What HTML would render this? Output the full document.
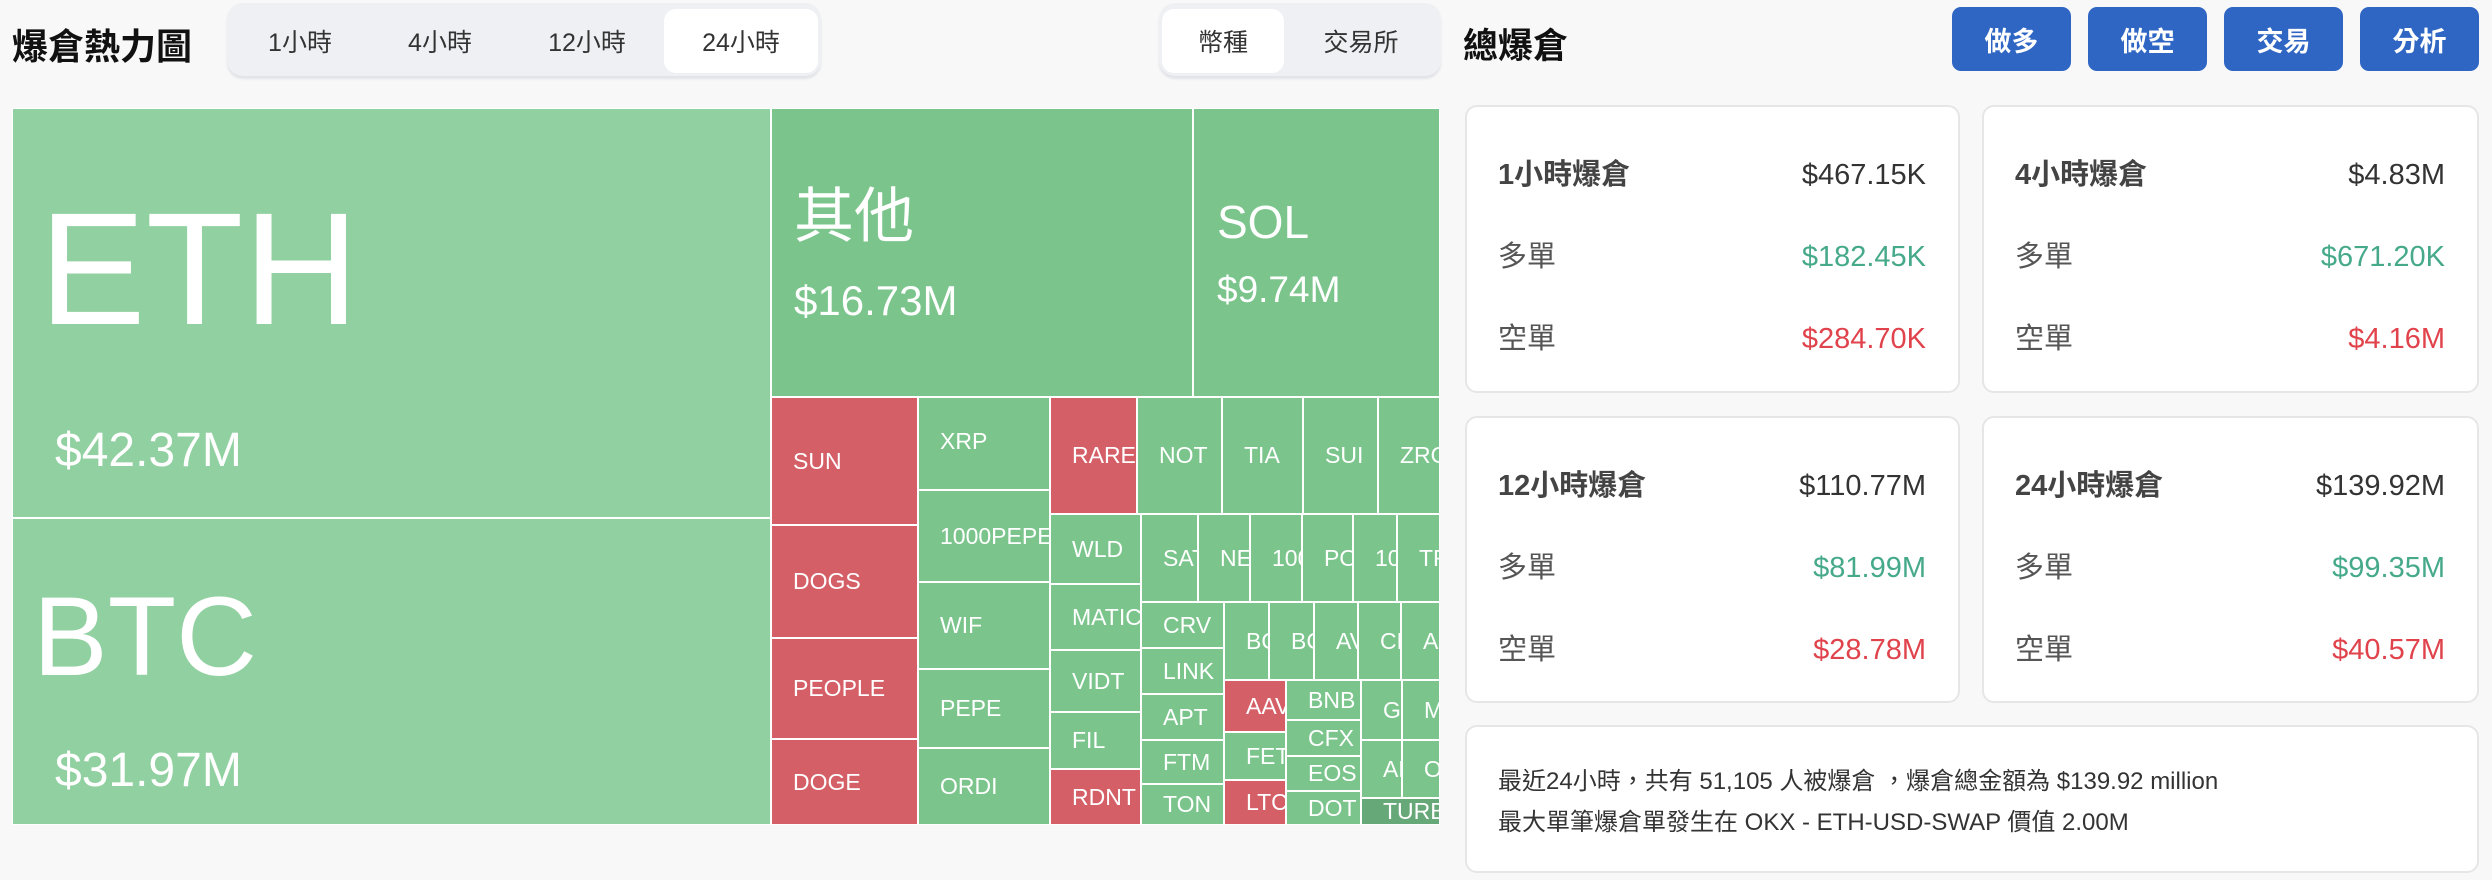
<!DOCTYPE html>
<html><head><meta charset="utf-8"><style>
*{margin:0;padding:0;box-sizing:border-box}
body{width:2492px;height:880px;background:#f8f8f8;font-family:"Liberation Sans","Noto Sans CJK TC",sans-serif;position:relative;overflow:hidden;color:#222}
.a{position:absolute}
.t{position:absolute;border:1.5px solid #fff;color:#fff;overflow:hidden;white-space:nowrap;display:flex;align-items:center;padding-left:21px;font-size:23px}
.g{background:#7bc58c}.r{background:#d55f66}.l{background:#91d0a1}.d{background:#66a877}
.grp{position:absolute;background:#eff0f4;border-radius:16px;box-shadow:0 3px 2px #e2e3e8}
.tab{position:absolute;top:6px;height:64px;display:flex;align-items:center;justify-content:center;font-size:25px;color:#333;border-radius:12px}
.act{background:#fff}
.btn{position:absolute;top:7px;height:64px;width:119px;background:#2f66c4;color:#fff;border-radius:9px;font-weight:bold;font-size:27px;display:flex;align-items:center;justify-content:center}
.card{position:absolute;background:#fff;border:2px solid #e6e6e6;border-radius:12px}
.row{position:absolute;left:31px;right:32px;height:40px;display:flex;align-items:center;justify-content:space-between;font-size:29px;color:#555;line-height:40px}
.row span{display:block;line-height:40px}
.row.h{color:#444;font-weight:bold}
.row.h span:last-child{font-weight:normal;color:#333}
.gr{color:#45a98a}.rd{color:#e0434c}
</style></head><body>
<div class="a" style="left:12px;top:18px;font-size:36px;font-weight:bold;color:#111">爆倉熱力圖</div>
<div class="grp" style="left:227px;top:3px;width:594px;height:73px">
<div class="tab" style="left:15px;width:116px">1小時</div>
<div class="tab" style="left:155px;width:116px">4小時</div>
<div class="tab" style="left:300px;width:120px">12小時</div>
<div class="tab act" style="left:437px;width:154px">24小時</div>
</div>
<div class="grp" style="left:1159px;top:3px;width:282px;height:73px">
<div class="tab act" style="left:3px;width:122px">幣種</div>
<div class="tab" style="left:138px;width:128px">交易所</div>
</div>

<div class="t l" style="left:12px;top:108px;width:759px;height:410px;display:block;padding:0">
<div class="a" style="left:26px;top:80px;font-size:160px;line-height:1">ETH</div>
<div class="a" style="left:42px;top:314px;font-size:48px">$42.37M</div></div>
<div class="t l" style="left:12px;top:518px;width:759px;height:307px;display:block;padding:0">
<div class="a" style="left:20px;top:62px;font-size:112px;line-height:1">BTC</div>
<div class="a" style="left:42px;top:224px;font-size:48px">$31.97M</div></div>
<div class="t g" style="left:771px;top:108px;width:422px;height:289px;display:block;padding:0">
<div class="a" style="left:22px;top:78px;font-size:60px;line-height:1">其他</div>
<div class="a" style="left:22px;top:168px;font-size:42px">$16.73M</div></div>
<div class="t g" style="left:1193px;top:108px;width:247px;height:289px;display:block;padding:0">
<div class="a" style="left:23px;top:90px;font-size:46px;line-height:1">SOL</div>
<div class="a" style="left:23px;top:160px;font-size:37px">$9.74M</div></div>

<div class="t r" style="left:771px;top:397px;width:147px;height:128px">SUN</div>
<div class="t r" style="left:771px;top:525px;width:147px;height:113px">DOGS</div>
<div class="t r" style="left:771px;top:638px;width:147px;height:101px">PEOPLE</div>
<div class="t r" style="left:771px;top:739px;width:147px;height:86px">DOGE</div>
<div class="t g" style="left:918px;top:397px;width:132px;height:93px;align-items:flex-start;padding-top:30px">XRP</div>
<div class="t g" style="left:918px;top:490px;width:132px;height:92px">1000PEPE</div>
<div class="t g" style="left:918px;top:582px;width:132px;height:87px">WIF</div>
<div class="t g" style="left:918px;top:669px;width:132px;height:79px">PEPE</div>
<div class="t g" style="left:918px;top:748px;width:132px;height:77px">ORDI</div>
<div class="t r" style="left:1050px;top:397px;width:87px;height:117px">RARE</div>
<div class="t g" style="left:1137px;top:397px;width:85px;height:117px">NOT</div>
<div class="t g" style="left:1222px;top:397px;width:81px;height:117px">TIA</div>
<div class="t g" style="left:1303px;top:397px;width:75px;height:117px">SUI</div>
<div class="t g" style="left:1378px;top:397px;width:62px;height:117px">ZRO</div>
<div class="t g" style="left:1050px;top:514px;width:91px;height:70px">WLD</div>
<div class="t g" style="left:1050px;top:584px;width:91px;height:66px">MATIC</div>
<div class="t g" style="left:1050px;top:650px;width:91px;height:62px">VIDT</div>
<div class="t g" style="left:1050px;top:712px;width:91px;height:57px">FIL</div>
<div class="t r" style="left:1050px;top:769px;width:91px;height:56px">RDNT</div>
<div class="t g" style="left:1141px;top:514px;width:57px;height:88px">SAT</div>
<div class="t g" style="left:1198px;top:514px;width:52px;height:88px">NEAR</div>
<div class="t g" style="left:1250px;top:514px;width:52px;height:88px">1000</div>
<div class="t g" style="left:1302px;top:514px;width:51px;height:88px">POL</div>
<div class="t g" style="left:1353px;top:514px;width:44px;height:88px">1000</div>
<div class="t g" style="left:1397px;top:514px;width:43px;height:88px">TRX</div>
<div class="t g" style="left:1141px;top:602px;width:83px;height:46px">CRV</div>
<div class="t g" style="left:1141px;top:648px;width:83px;height:46px">LINK</div>
<div class="t g" style="left:1141px;top:694px;width:83px;height:46px">APT</div>
<div class="t g" style="left:1141px;top:740px;width:83px;height:44px">FTM</div>
<div class="t g" style="left:1141px;top:784px;width:83px;height:41px">TON</div>
<div class="t g" style="left:1224px;top:602px;width:45px;height:78px">BOME</div>
<div class="t g" style="left:1269px;top:602px;width:45px;height:78px">BCH</div>
<div class="t g" style="left:1314px;top:602px;width:44px;height:78px">AVAX</div>
<div class="t g" style="left:1358px;top:602px;width:43px;height:78px">CHZ</div>
<div class="t g" style="left:1401px;top:602px;width:39px;height:78px">ARB</div>
<div class="t r" style="left:1224px;top:680px;width:62px;height:52px">AAVE</div>
<div class="t g" style="left:1224px;top:732px;width:62px;height:48px">FET</div>
<div class="t r" style="left:1224px;top:780px;width:62px;height:45px">LTC</div>
<div class="t g" style="left:1286px;top:680px;width:75px;height:40px">BNB</div>
<div class="t g" style="left:1286px;top:720px;width:75px;height:36px">CFX</div>
<div class="t g" style="left:1286px;top:756px;width:75px;height:35px">EOS</div>
<div class="t g" style="left:1286px;top:791px;width:75px;height:34px">DOT</div>
<div class="t g" style="left:1361px;top:680px;width:41px;height:60px">GALA</div>
<div class="t g" style="left:1402px;top:680px;width:38px;height:60px">MEW</div>
<div class="t g" style="left:1361px;top:740px;width:41px;height:58px">ADA</div>
<div class="t g" style="left:1402px;top:740px;width:38px;height:58px">OP</div>
<div class="t d" style="left:1361px;top:798px;width:79px;height:27px">TURBO</div>

<div class="a" style="left:1463px;top:18px;font-size:35px;font-weight:bold;color:#111">總爆倉</div>
<div class="btn" style="left:1952px">做多</div>
<div class="btn" style="left:2088px">做空</div>
<div class="btn" style="left:2224px">交易</div>
<div class="btn" style="left:2360px">分析</div>

<div class="card" style="left:1465px;top:105px;width:495px;height:288px">
<div class="row h" style="top:48px"><span>1小時爆倉</span><span>$467.15K</span></div>
<div class="row" style="top:130px"><span>多單</span><span class="gr">$182.45K</span></div>
<div class="row" style="top:212px"><span>空單</span><span class="rd">$284.70K</span></div></div>
<div class="card" style="left:1982px;top:105px;width:497px;height:288px">
<div class="row h" style="top:48px"><span>4小時爆倉</span><span>$4.83M</span></div>
<div class="row" style="top:130px"><span>多單</span><span class="gr">$671.20K</span></div>
<div class="row" style="top:212px"><span>空單</span><span class="rd">$4.16M</span></div></div>
<div class="card" style="left:1465px;top:416px;width:495px;height:287px">
<div class="row h" style="top:48px"><span>12小時爆倉</span><span>$110.77M</span></div>
<div class="row" style="top:130px"><span>多單</span><span class="gr">$81.99M</span></div>
<div class="row" style="top:212px"><span>空單</span><span class="rd">$28.78M</span></div></div>
<div class="card" style="left:1982px;top:416px;width:497px;height:287px">
<div class="row h" style="top:48px"><span>24小時爆倉</span><span>$139.92M</span></div>
<div class="row" style="top:130px"><span>多單</span><span class="gr">$99.35M</span></div>
<div class="row" style="top:212px"><span>空單</span><span class="rd">$40.57M</span></div></div>
<div class="card" style="left:1465px;top:725px;width:1014px;height:148px;font-size:24px;color:#333;line-height:41px;padding:34px 0 0 31px">
最近24小時，共有 51,105 人被爆倉 ，爆倉總金額為 $139.92 million<br>最大單筆爆倉單發生在 OKX - ETH-USD-SWAP 價值 2.00M</div>
</body></html>
